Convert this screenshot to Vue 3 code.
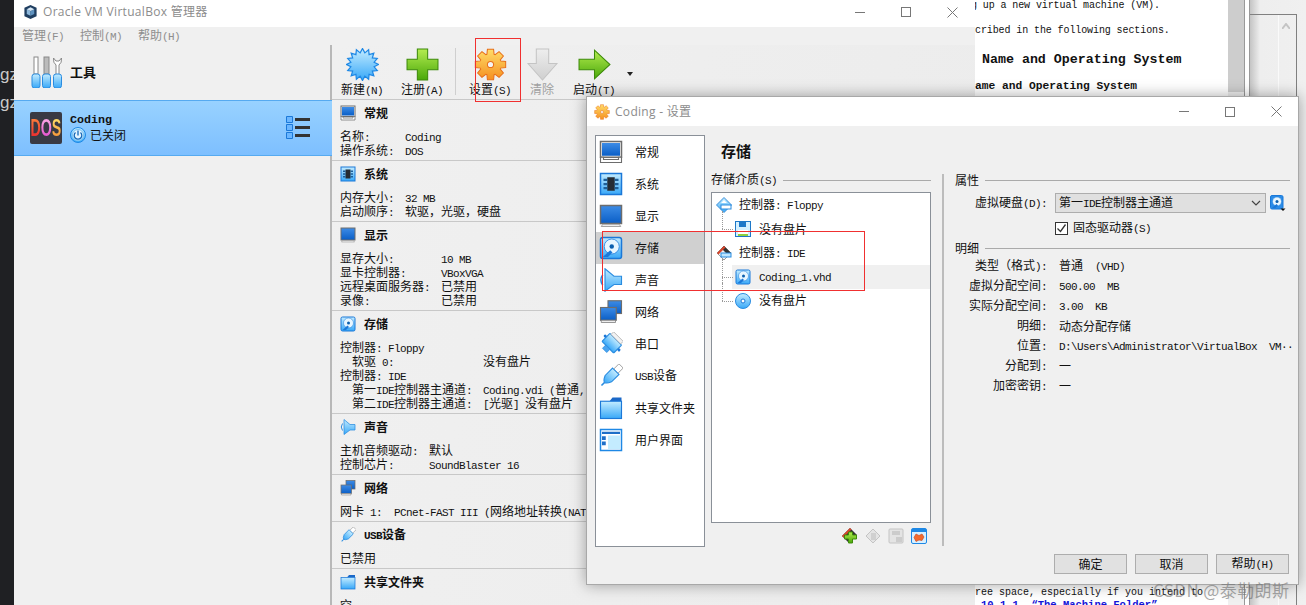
<template>
  <div class="desktop">
    <svg class="defs" width="0" height="0">
      <defs>
        <linearGradient id="gBlue" x1="0" y1="0" x2="0" y2="1"><stop offset="0" stop-color="#3d8ce6" /><stop offset="1" stop-color="#0a5ec6" /></linearGradient>
        <linearGradient id="gSky" x1="0" y1="0" x2="0" y2="1"><stop offset="0" stop-color="#c4ecff" /><stop offset="1" stop-color="#38a8f8" /></linearGradient>
        <linearGradient id="gGreen" x1="0" y1="0" x2="0" y2="1"><stop offset="0" stop-color="#b4ec50" /><stop offset="1" stop-color="#4aa80a" /></linearGradient>
        <linearGradient id="gOrange" x1="0" y1="0" x2="0" y2="1"><stop offset="0" stop-color="#ffdc68" /><stop offset="1" stop-color="#f59020" /></linearGradient>
        <linearGradient id="gGrey" x1="0" y1="0" x2="0" y2="1"><stop offset="0" stop-color="#eeeeee" /><stop offset="1" stop-color="#cfcfcf" /></linearGradient>
      </defs>
      <symbol id="monitor" viewBox="0 0 32 32">
        <rect x="2" y="2" width="28" height="21" fill="#f4f4f4" stroke="#6d6d6d" stroke-width="2" />
        <rect x="4" y="4" width="24" height="17" fill="url(#gBlue)" />
        <path d="M2 23v7h28v-7h-4v3H6v-3z" fill="#fff" stroke="#6d6d6d" stroke-width="1.5" />
      </symbol>
      <symbol id="display" viewBox="0 0 32 32">
        <rect x="2" y="2" width="28" height="24" fill="url(#gBlue)" stroke="#6d6d6d" stroke-width="2" />
        <path d="M5 27l-2 3h26l-2-3z" fill="#eee" stroke="#888" />
      </symbol>
      <symbol id="chip" viewBox="0 0 32 32">
        <rect x="2" y="2" width="28" height="28" fill="url(#gSky)" stroke="#1b78d8" stroke-width="2" />
        <rect x="11" y="7" width="10" height="18" fill="#262c33" />
        <path d="M6 9h5v3H6zM6 14.5h5v3H6zM6 20h5v3H6zM21 9h5v3h-5zM21 14.5h5v3h-5zM21 20h5v3h-5z" fill="#1f5f98" />
      </symbol>
      <symbol id="disk" viewBox="0 0 32 32">
        <rect x="2" y="2" width="28" height="28" rx="3" fill="url(#gSky)" stroke="#1b78d8" stroke-width="2" />
        <circle cx="17" cy="14" r="10" fill="#e8f6ff" stroke="#1b78d8" />
        <circle cx="17" cy="14" r="3" fill="#0c5fae" />
        <path d="M5 28l10-9 3 3-6 6z" fill="#1b78d8" />
      </symbol>
      <symbol id="diskDrop" viewBox="0 0 32 32">
        <rect x="1" y="1" width="25" height="27" rx="3" fill="#2a8ce8" stroke="#1b78d8" stroke-width="2" />
        <circle cx="14" cy="13" r="9" fill="#e8f6ff" stroke="#1b78d8" />
        <circle cx="14" cy="13" r="3" fill="#0c5fae" />
        <path d="M4 26l9-8 3 3-5 5z" fill="#1b78d8" />
        <path d="M21 27h10l-5 5z" fill="#111" />
      </symbol>
      <symbol id="speaker" viewBox="0 0 32 32">
        <path d="M5 9Q0 16 5 23" fill="none" stroke="#2a8ce0" stroke-width="2" />
        <path d="M8 1l12 10h10v11H20L8 31z" fill="url(#gSky)" stroke="#2a8ce0" stroke-width="1.5" />
      </symbol>
      <symbol id="network" viewBox="0 0 32 32">
        <rect x="12" y="1" width="18" height="17" fill="url(#gBlue)" stroke="#6d6d6d" stroke-width="1.5" />
        <rect x="2" y="10" width="21" height="17" fill="url(#gBlue)" stroke="#6d6d6d" stroke-width="1.5" />
        <path d="M3 27h19v3H3z" fill="#eee" stroke="#777" />
      </symbol>
      <symbol id="serial" viewBox="0 0 32 32">
        <g transform="rotate(45 16 16)">
          <rect x="5" y="7" width="22" height="15" rx="1" fill="url(#gSky)" stroke="#2a8ce0" stroke-width="1.5" />
          <path d="M7 2h18v5H7z" fill="#f2f2f2" stroke="#aaa" />
          <path d="M12 22h8v6h-8z" fill="#4aa4f0" stroke="#2a8ce0" />
          <circle cx="3" cy="14" r="2" fill="#1b78d8" /><circle cx="29" cy="14" r="2" fill="#1b78d8" />
        </g>
      </symbol>
      <symbol id="usb" viewBox="0 0 32 32">
        <g transform="rotate(45 16 16)">
          <rect x="12" y="-3" width="8" height="10" fill="#fff" stroke="#888" />
          <path d="M10 7h12v14q-3 7-6 7t-6-7z" fill="url(#gSky)" stroke="#2a8ce0" stroke-width="1.5" />
          <path d="M16 28v6" stroke="#2a8ce0" stroke-width="2" />
        </g>
      </symbol>
      <symbol id="folder" viewBox="0 0 32 32">
        <path d="M14 7l4-5h12v5z" fill="#1b68c8" />
        <rect x="2" y="7" width="28" height="23" fill="url(#gSky)" stroke="#1b78d8" stroke-width="1.5" />
      </symbol>
      <symbol id="uiwin" viewBox="0 0 32 32">
        <rect x="2" y="2" width="28" height="28" fill="#fff" stroke="#1e88e5" stroke-width="2" />
        <rect x="4" y="5" width="24" height="3" fill="#1f6fc8" />
        <path d="M4 11h5v5H4zM4 18h5v5H4z" fill="#1f6fc8" />
        <rect x="12" y="10" width="16" height="18" fill="#c4ecff" />
      </symbol>
      <symbol id="star" viewBox="0 0 32 32"><polygon :points="burst" fill="url(#gSky)" stroke="#1e88e5" stroke-width="1.2" /></symbol>
      <symbol id="gear" viewBox="0 0 32 32">
        <polygon :points="gear" fill="url(#gOrange)" stroke="#e8701a" stroke-width="1" />
        <circle cx="16" cy="16" r="3" fill="#f4f4f4" stroke="#e8701a" />
      </symbol>
      <symbol id="plus" viewBox="0 0 32 32"><path d="M11 1h10v10h10v10H21v10H11V21H1V11h10z" fill="url(#gGreen)" stroke="#3d8a0a" /></symbol>
      <symbol id="down" viewBox="0 0 32 32"><path d="M10 1h12v14h8L16 31 2 15h8z" fill="url(#gGrey)" stroke="#c4c4c4" /></symbol>
      <symbol id="right" viewBox="0 0 32 32"><path d="M1 11h15V2l15 14-15 14v-9H1z" fill="url(#gGreen)" stroke="#3d8a0a" /></symbol>
      <symbol id="tools" viewBox="0 0 32 32">
        <rect x="3" y="1" width="4" height="17" fill="#fff" stroke="#888" />
        <rect x="13" y="1" width="5" height="17" fill="#bbb" stroke="#888" />
        <path d="M25 18V9q-3-2-2.5-7l2.5 3h3l2.5-3q.5 5-2.5 7v9" fill="#fff" stroke="#888" />
        <rect x="1" y="18" width="8" height="14" rx="2.5" fill="url(#gSky)" stroke="#2a8ce0" />
        <rect x="11.5" y="18" width="8" height="14" rx="2.5" fill="url(#gSky)" stroke="#2a8ce0" />
        <rect x="22.5" y="18" width="8" height="14" rx="2.5" fill="url(#gSky)" stroke="#2a8ce0" />
      </symbol>
      <symbol id="power" viewBox="0 0 16 16">
        <circle cx="8" cy="8" r="7.5" fill="url(#gSky)" stroke="#1e88e5" />
        <circle cx="8" cy="8" r="5.5" fill="#e4f4ff" stroke="#7cc4f4" />
        <path d="M5.5 5.5a3.8 3.8 0 1 0 5 0M8 3.5v5" fill="none" stroke="#1468b8" stroke-width="1.3" />
      </symbol>
      <symbol id="list" viewBox="0 0 24 24">
        <path d="M.5.5h6v6h-6zM.5 8.5h6v6h-6zM.5 16.5h6v6h-6z" fill="#6bb6ff" stroke="#1b78d8" />
        <path d="M9 2h15v3H9zM9 10h15v3H9zM9 18h15v3H9z" fill="#333" />
      </symbol>
      <symbol id="vbox" viewBox="0 0 16 16">
        <path d="M8 .5l6.500 3v9L8 15.500l-6.500-3v-9z" fill="#1f3e60" />
        <path d="M4 5l4 2v5l-4-2z" fill="#8db8dc" /><path d="M12 5L8 7v5l4-2z" fill="#5f93c0" /><path d="M8 3l4 2-4 2-4-2z" fill="#d5e6f4" />
      </symbol>
      <symbol id="ctlFloppy" viewBox="0 0 16 16">
        <path d="M8 .5L15.500 8 8 15.500.5 8z" fill="url(#gSky)" stroke="#3a8ed8" />
        <path d="M5 6l3-3 3 3z" fill="#fff" /><rect x="5" y="8" width="10" height="4" fill="#fff" stroke="#2a8ce0" />
      </symbol>
      <symbol id="ctlIde" viewBox="0 0 16 16">
        <path d="M1 8l7-7 7 7-7 7z" fill="#f4f4f4" stroke="#999" />
        <path d="M8 1l7 7-2.500 2.500-7-7z" fill="#333" /><path d="M1 8l7-7 1.500 1.500-7 7z" fill="#d9442a" />
        <rect x="5" y="8" width="10" height="4" fill="#bfe6ff" stroke="#2a8ce0" />
      </symbol>
      <symbol id="floppy" viewBox="0 0 16 16">
        <rect x=".5" y=".5" width="15" height="15" fill="#d4f0ff" stroke="#1e78c8" />
        <rect x="4" y="1" width="7" height="5" fill="#1e78c8" /><rect x="3" y="9" width="10" height="6" fill="#fff" />
        <rect x="3" y="13" width="10" height="2" fill="#8ed040" />
      </symbol>
      <symbol id="cd" viewBox="0 0 16 16">
        <circle cx="8" cy="8" r="7.5" fill="url(#gSky)" stroke="#2a8ce0" />
        <circle cx="8" cy="8" r="2" fill="#fff" stroke="#1b78d8" />
      </symbol>
      <symbol id="addCtl" viewBox="0 0 16 16">
        <path d="M0 8l8-8 7 7-8 8z" fill="#333" /><path d="M0 8l8-8 1.500 1.500-8 8z" fill="#d9442a" />
        <path d="M6.500 4h4v3h4v4h-4v4h-4v-4h-4V7h4z" fill="url(#gGreen)" stroke="#3d8a0a" />
      </symbol>
      <symbol id="delCtl" viewBox="0 0 16 16">
        <path d="M1 8l7-7 7 7-7 7z" fill="#e4e4e4" stroke="#c4c4c4" />
        <path d="M6 5h5v7H6z" fill="#d0d0d0" />
      </symbol>
      <symbol id="addAtt" viewBox="0 0 16 16">
        <rect x="1" y="1" width="14" height="14" rx="1" fill="#e4e4e4" stroke="#c4c4c4" />
        <path d="M4 3h8v4H4zM8 9h6v5H8z" fill="#cccccc" />
      </symbol>
      <symbol id="delAtt" viewBox="0 0 16 16">
        <rect x=".5" y=".5" width="15" height="15" rx="1.5" fill="#d8f0ff" stroke="#1e88e5" />
        <rect x="1" y="1" width="14" height="3" fill="#1e88e5" />
        <path d="M5 6l3 1.500L11 6l2 3-2 3.500-3-.5-3 1.500-2-4z" fill="#f26a2e" stroke="#c8421a" stroke-width=".6" />
      </symbol>
    </svg>

    <div class="under-left">
      <div>gz</div>
      <div>gz</div>
    </div>

    <div class="back">
      <div class="doc">
        <div class="doc-line first">g up a new virtual machine (VM).</div>
        <div class="doc-line second">cribed in the following sections.</div>
        <div class="doc-h1">Name and Operating System</div>
        <div class="doc-h2">ame and Operating System</div>
        <div class="doc-line last">ree space, especially if you intend to</div>
        <div class="doc-link">10.1.1. “The Machine Folder”</div>
      </div>
      <div class="doc-scroll"><div class="thumb"></div></div>
      <div class="doc-edge"></div>
      <div class="back-right">
        <div class="back-box">
          <div class="back-track"></div>
          <svg class="caret" viewBox="0 0 8 6" width="8" height="6"><path d="M0 6l4-5 4 5" fill="none" stroke="#c4c4c4" stroke-width="2" /></svg>
        </div>
      </div>
    </div>

    <!-- manager window -->
    <div class="manager">
      <div class="titlebar">
        <svg class="tb-icon"><use href="#vbox" /></svg>
        <span class="tb-text">Oracle VM VirtualBox 管理器</span>
        <div class="ctrls">
          <span class="ctrl"><i class="c-min"></i></span>
          <span class="ctrl"><i class="c-max"></i></span>
          <span class="ctrl"><svg width="11" height="11" viewBox="0 0 11 11"><path d="M.5.5l10 10M10.500.5l-10 10" stroke="#777" fill="none" /></svg></span>
        </div>
      </div>
      <div class="menubar">
        <span v-for="m in menus" :key="m" class="menu-item"><span v-for="p in seg(m)" :class="{ m: p.m }">{{ p.t }}</span></span>
      </div>
      <div class="mgr-body">
        <div class="vm-list">
          <div class="tools-row">
            <svg class="ic32"><use href="#tools" /></svg>
            <b>工具</b>
          </div>
          <div class="vm-row">
            <div class="dos"><div class="dos-text"><span class="d1">D</span><span class="d2">O</span><span class="d3">S</span></div></div>
            <div class="vm-meta">
              <b class="m vm-name">Coding</b>
              <div class="vm-state"><svg class="ic16"><use href="#power" /></svg>已关闭</div>
            </div>
            <svg class="vm-menu"><use href="#list" /></svg>
          </div>
        </div>
        <div class="mgr-right">
          <div class="toolbar">
            <div v-for="b in toolButtons" :key="b.label" class="tbtn" :class="[b.cls, { off: b.off }]">
              <svg class="ic33"><use :href="'#' + b.icon" /></svg>
              <span class="tbtn-label"><span v-for="p in seg(b.label)" :class="{ m: p.m }">{{ p.t }}</span></span>
            </div>
            <i class="tdrop"></i>
          </div>
          <section v-for="s in sections" :key="s.title" class="sec">
            <div class="sec-head">
              <svg class="ic16"><use :href="'#' + s.icon" /></svg>
              <b><span v-for="p in seg(s.title)" :class="{ m: p.m }">{{ p.t }}</span></b>
            </div>
            <div v-for="r in s.rows" class="sec-row">
              <span class="sec-label" :style="{ width: s.col + 'px' }"><span v-for="p in seg(r[0])" :class="{ m: p.m }">{{ p.t }}</span></span>
              <span><span v-for="p in seg(r[1])" :class="{ m: p.m }">{{ p.t }}</span></span>
            </div>
          </section>
        </div>
      </div>
    </div>

    <!-- settings dialog -->
    <div class="dialog">
      <div class="d-title">
        <svg class="ic16"><use href="#gear" /></svg>
        <span class="tb-text">Coding - 设置</span>
        <div class="ctrls">
          <span class="ctrl"><i class="c-min"></i></span>
          <span class="ctrl"><i class="c-max"></i></span>
          <span class="ctrl"><svg width="11" height="11" viewBox="0 0 11 11"><path d="M.5.5l10 10M10.500.5l-10 10" stroke="#777" fill="none" /></svg></span>
        </div>
      </div>
      <div class="d-body">
        <div class="d-main">
          <div class="side">
            <div v-for="it in sideItems" :key="it.label" class="side-item" :class="{ sel: it.sel }">
              <svg class="ic24"><use :href="'#' + it.icon" /></svg>
              <span><span v-for="p in seg(it.label)" :class="{ m: p.m }">{{ p.t }}</span></span>
            </div>
          </div>
          <div class="center">
            <div class="heading">存储</div>
            <div class="group"><span>存储介质<span class="m">(S)</span></span></div>
            <div class="tree">
              <div v-for="t in treeRows" :key="t.text" class="tree-row" :class="{ child: t.child, mid: t.mid, chosen: t.sel }">
                <div class="tree-cell">
                  <svg class="ic16"><use :href="'#' + t.icon" /></svg>
                  <span><span v-for="p in seg(t.text)" :class="{ m: p.m }">{{ p.t }}</span></span>
                </div>
              </div>
            </div>
            <div class="tree-tools">
              <svg class="ic16"><use href="#addCtl" /></svg>
              <svg class="ic16"><use href="#delCtl" /></svg>
              <svg class="ic16"><use href="#addAtt" /></svg>
              <svg class="ic16"><use href="#delAtt" /></svg>
            </div>
          </div>
          <div class="splitter"></div>
          <div class="props">
            <div class="group"><span>属性</span></div>
            <div class="form-row">
              <span class="p-label">虚拟硬盘<span class="m">(D):</span></span>
              <div class="combo">
                <span>第一<span class="m">IDE</span>控制器主通道</span>
                <svg width="10" height="6" viewBox="0 0 10 6"><path d="M1 1l4 4 4-4" fill="none" stroke="#444" stroke-width="1.2" /></svg>
              </div>
              <svg class="ic16 combo-ic"><use href="#diskDrop" /></svg>
            </div>
            <div class="check-row">
              <span class="check"><svg width="11" height="11" viewBox="0 0 11 11"><path d="M1.5 5.5l3 3 5-7" fill="none" stroke="#333" stroke-width="1.3" /></svg></span>
              <span>固态驱动器<span class="m">(S)</span></span>
            </div>
            <div class="group detail-head"><span>明细</span></div>
            <div v-for="d in details" :key="d[0]" class="p-row">
              <span class="p-label"><span v-for="p in seg(d[0])" :class="{ m: p.m }">{{ p.t }}</span></span>
              <span class="p-value"><span v-for="p in seg(d[1])" :class="{ m: p.m }">{{ p.t }}</span></span>
            </div>
          </div>
        </div>
        <div class="d-foot">
          <button class="btn">确定</button>
          <button class="btn">取消</button>
          <button class="btn">帮助<span class="m">(H)</span></button>
        </div>
      </div>
    </div>

    <!-- annotations over the screenshot -->
    <div class="mark mark-settings"></div>
    <div class="mark mark-ide"></div>
    <div class="watermark">CSDN @泰勒朗斯</div>
  </div>
</template>

<script setup>
const seg = (text) =>
  (text.match(/[\x00-\x7f\xb7]+|[^\x00-\x7f\xb7]+/g) || []).map((t) => ({ t, m: /^[\x00-\x7f\xb7]/.test(t) }));

const ring = (n, fn) => {
  const pts = [];
  for (let i = 0; i < n; i++) fn((i / n) * Math.PI * 2, pts);
  return pts.map((p) => p.map((v) => v.toFixed(2)).join(',')).join(' ');
};
const at = (a, r) => [16 + Math.cos(a) * r, 16 + Math.sin(a) * r];

const burst = ring(16, (a, pts) => {
  pts.push(at(a, 15.5), at(a + Math.PI / 16, 11.5));
});
const gear = ring(8, (a, pts) => {
  pts.push(at(a - 0.34, 10.5), at(a - 0.2, 15), at(a + 0.2, 15), at(a + 0.34, 10.5));
});

const menus = ['管理(F)', '控制(M)', '帮助(H)'];

const toolButtons = [
  { label: '新建(N)', icon: 'star', cls: 'b-new' },
  { label: '注册(A)', icon: 'plus', cls: 'b-reg' },
  { label: '设置(S)', icon: 'gear', cls: 'b-set' },
  { label: '清除', icon: 'down', cls: 'b-clr', off: true },
  { label: '启动(T)', icon: 'right', cls: 'b-run' },
];

const sections = [
  { title: '常规', icon: 'monitor', col: 65, rows: [['名称:', 'Coding'], ['操作系统:', 'DOS']] },
  { title: '系统', icon: 'chip', col: 65, rows: [['内存大小:', '32 MB'], ['启动顺序:', '软驱，光驱，硬盘']] },
  { title: '显示', icon: 'display', col: 101, rows: [['显存大小:', '10 MB'], ['显卡控制器:', 'VBoxVGA'], ['远程桌面服务器:', '已禁用'], ['录像:', '已禁用']] },
  {
    title: '存储', icon: 'disk', col: 143,
    rows: [['控制器: Floppy', ''], ['  软驱 0:', '没有盘片'], ['控制器: IDE', ''], ['  第一IDE控制器主通道:', 'Coding.vdi (普通,'], ['  第二IDE控制器主通道:', '[光驱] 没有盘片']],
  },
  { title: '声音', icon: 'speaker', col: 89, rows: [['主机音频驱动:', '默认'], ['控制芯片:', 'SoundBlaster 16']] },
  { title: '网络', icon: 'network', col: 0, rows: [['网卡 1:  PCnet-FAST III (网络地址转换(NAT)', '']] },
  { title: 'USB设备', icon: 'usb', col: 0, rows: [['已禁用', '']] },
  { title: '共享文件夹', icon: 'folder', col: 0, rows: [['空', '']] },
];

const sideItems = [
  { label: '常规', icon: 'monitor' },
  { label: '系统', icon: 'chip' },
  { label: '显示', icon: 'display' },
  { label: '存储', icon: 'disk', sel: true },
  { label: '声音', icon: 'speaker' },
  { label: '网络', icon: 'network' },
  { label: '串口', icon: 'serial' },
  { label: 'USB设备', icon: 'usb' },
  { label: '共享文件夹', icon: 'folder' },
  { label: '用户界面', icon: 'uiwin' },
];

const treeRows = [
  { text: '控制器: Floppy', icon: 'ctlFloppy' },
  { text: '没有盘片', icon: 'floppy', child: true },
  { text: '控制器: IDE', icon: 'ctlIde' },
  { text: 'Coding_1.vhd', icon: 'disk', child: true, mid: true, sel: true },
  { text: '没有盘片 ', icon: 'cd', child: true },
];

const details = [
  ['类型（格式):', '普通  (VHD)'],
  ['虚拟分配空间:', '500.00  MB'],
  ['实际分配空间:', '3.00  KB'],
  ['明细:', '动态分配存储'],
  ['位置:', 'D:\\Users\\Administrator\\VirtualBox  VM··'],
  ['分配到:', '一'],
  ['加密密钥:', '一'],
];
</script>

<style>
body {
  margin: 0;
}
</style>

<style scoped>
.desktop {
  position: relative;
  width: 1306px;
  height: 605px;
  overflow: hidden;
  background: #1f2023;
  font: 12px/14px "Noto Sans CJK SC", "Liberation Sans", sans-serif;
  color: #111;
}
.defs {
  position: absolute;
}
.m {
  font-family: "Liberation Mono", monospace;
  font-size: 11px;
  letter-spacing: -.6px;
  white-space: pre;
}
.ic16 { width: 16px; height: 16px; flex: none; }
.ic24 { width: 24px; height: 24px; flex: none; }
.ic32 { width: 32px; height: 32px; flex: none; }
.ic33 { width: 33px; height: 33px; flex: none; }

.under-left {
  position: absolute;
  left: 0;
  top: 61px;
  width: 14px;
  overflow: hidden;
  color: #c8c8c8;
  font: 17px/28px "Liberation Sans", sans-serif;
}

.back {
  position: absolute;
  left: 975px;
  top: 0;
  right: 0;
  height: 605px;
  display: flex;
}
.doc {
  width: 253px;
  height: 605px;
  background: #fff;
  display: flex;
  flex-direction: column;
  overflow: hidden;
  white-space: pre;
  font-family: "Liberation Mono", monospace;
  font-size: 10px;
  line-height: 12px;
}
.first {
  margin: 0 0 0 -4px;
  letter-spacing: -.1px;
}
.second {
  margin-top: 13px;
  letter-spacing: -.1px;
}
.doc-h1 {
  margin-top: 15px;
  padding-left: 7px;
  font-size: 13.3px;
  line-height: 16px;
  font-weight: 700;
}
.doc-h2 {
  margin-top: 11px;
  font-size: 11.25px;
  line-height: 14px;
  font-weight: 700;
}
.last { margin-top: auto; }
.doc-link {
  margin-bottom: -6px;
  padding-left: 6px;
  color: #1414d8;
  font-size: 10.5px;
  font-weight: 700;
}
.doc-scroll {
  width: 16px;
  background: #f0f0f0;
}
.thumb {
  height: 92px;
  background: #cdcdcd;
}
.doc-edge {
  width: 6px;
  background: #fff;
  border-left: 1px solid #999;
  border-right: 1px solid #999;
  box-sizing: border-box;
}
.back-right {
  flex: 1;
  background: linear-gradient(90deg, #c4c4c4, #eeeeee 10px, #f0f0f0);
  padding-top: 14px;
}
.back-box {
  position: relative;
  width: 46px;
  height: 600px;
  border-top: 1px solid #808080;
  border-right: 1px solid #808080;
}
.back-track {
  position: absolute;
  left: 28px;
  top: 0;
  bottom: 0;
  width: 1px;
  background: #fafafa;
}
.caret {
  position: absolute;
  left: 32px;
  top: 8px;
}

.manager {
  position: absolute;
  left: 14px;
  top: 0;
  width: 961px;
  height: 605px;
  display: flex;
  flex-direction: column;
  background: #f0f0f0;
}
.titlebar {
  height: 27px;
  flex: none;
  box-sizing: border-box;
  display: flex;
  align-items: center;
  padding: 0 0 3px 9px;
  background: #fff;
}
.tb-icon {
  width: 15px;
  height: 16px;
  margin-right: 5px;
}
.tb-text {
  color: #8c8c8c;
  font-family: "Open Sans", "Noto Sans CJK SC", sans-serif;
  font-size: 12px;
  letter-spacing: .3px;
}
.ctrls {
  margin-left: auto;
  display: flex;
}
.d-title .ctrls {
  margin-right: -1px;
}
.ctrl {
  width: 46px;
  display: flex;
  align-items: center;
  justify-content: center;
  height: 16px;
}
.c-min {
  width: 10px;
  height: 1px;
  background: #777;
}
.c-max {
  width: 10px;
  height: 10px;
  box-sizing: border-box;
  border: 1px solid #777;
}
.menubar {
  height: 18px;
  flex: none;
  display: flex;
  align-items: center;
  gap: 16px;
  padding-left: 8px;
  color: #8e8e8e;
}
.mgr-body {
  flex: 1;
  display: flex;
  min-height: 0;
}
.vm-list {
  width: 318px;
  flex: none;
  box-sizing: border-box;
  border-right: 2px solid #b8b8b8;
}
.tools-row {
  height: 54px;
  display: flex;
  align-items: center;
  gap: 7px;
  padding-left: 17px;
  font-size: 13px;
}
.vm-row {
  height: 56px;
  box-sizing: border-box;
  display: flex;
  align-items: center;
  padding-left: 16px;
  margin-top: 1px;
  margin-right: -2px;
  position: relative;
  background: linear-gradient(#98d2ff, #7dbfff);
  border-top: 1px solid #56aaf0;
  border-bottom: 1px solid #56aaf0;
}
.dos {
  width: 32px;
  height: 32px;
  flex: none;
  border-radius: 2px;
  background: #393a44;
  display: flex;
  justify-content: center;
  align-items: center;
  overflow: hidden;
  font: 700 23px/24px "Liberation Sans", sans-serif;
}
.dos-text {
  display: flex;
  flex: none;
  transform: scaleX(.62);
}
.dos-text span {
  display: block;
  color: transparent;
  -webkit-background-clip: text;
  background-clip: text;
}
.d1 { background-image: linear-gradient(#ff8a3c, #e81c2c); }
.d2 { background-image: linear-gradient(#ffb8e8, #e040c8); }
.d3 { background-image: linear-gradient(#ffe870, #f58a30); }
.vm-meta {
  margin-left: 8px;
}
.vm-name {
  font-size: 11.7px;
  letter-spacing: 0;
  display: block;
  line-height: 13px;
}
.vm-state {
  display: flex;
  align-items: center;
  gap: 4px;
  font-size: 12px;
}
.vm-menu {
  width: 24px;
  height: 24px;
  position: absolute;
  left: 272px;
  top: 15px;
}

.mgr-right {
  flex: 1;
  min-width: 0;
  overflow: hidden;
  background: linear-gradient(100deg, #f0f0f0, #ececec);
}
.toolbar {
  height: 54px;
  display: flex;
  box-sizing: border-box;
  padding: 3px 0 0;
}
.tbtn {
  display: flex;
  flex-direction: column;
  align-items: center;
  width: 60px;
}
.tbtn-label {
  margin-top: 1px;
  white-space: nowrap;
}
.b-reg {
  margin-right: 4px;
  position: relative;
}
.b-reg::after {
  content: "";
  position: absolute;
  right: -4px;
  top: 0;
  bottom: 4px;
  width: 1px;
  background: #cfcfcf;
}
.b-set { margin-left: 4px; }
.b-clr { width: 44px; }
.off { color: #a0a0a0; }
.tdrop {
  width: 0;
  height: 0;
  margin: 24px 0 0 3px;
  border-left: 3.5px solid transparent;
  border-right: 3.5px solid transparent;
  border-top: 4px solid #222;
}
.sec {
  border-top: 1px solid #c8c8c8;
  padding-bottom: 3px;
  white-space: pre;
}
.sec-head {
  height: 25px;
  display: flex;
  align-items: center;
  gap: 8px;
  padding-left: 8px;
  margin-bottom: 4px;
}
.sec-row {
  display: flex;
  padding-left: 8px;
  height: 14px;
}
.sec-label {
  flex: none;
}

.dialog {
  position: absolute;
  left: 586px;
  top: 96px;
  width: 713px;
  height: 489px;
  box-sizing: border-box;
  border: 1px solid #a8a8a8;
  background: #f0f0f0;
  box-shadow: 0 0 14px rgba(0, 0, 0, .35);
  display: flex;
  flex-direction: column;
}
.d-title {
  height: 29px;
  flex: none;
  display: flex;
  align-items: center;
  gap: 5px;
  padding-left: 7px;
  background: #fff;
}
.d-body {
  padding: 9px 9px 0 8px;
}
.d-main {
  display: flex;
  height: 412px;
}
.side {
  width: 110px;
  flex: none;
  box-sizing: border-box;
  border: 1px solid #8a9098;
  background: #fff;
}
.side-item {
  height: 32px;
  display: flex;
  align-items: center;
  gap: 12px;
  padding-left: 3px;
}
.side-item.sel {
  background: #d0d0d0;
}
.center {
  width: 220px;
  flex: none;
  margin-left: 6px;
}
.heading {
  padding: 6px 0 0 10px;
  font-size: 15px;
  font-weight: 700;
  line-height: 20px;
}
.group {
  display: flex;
  align-items: center;
  gap: 6px;
  height: 14px;
}
.group::after {
  content: "";
  flex: 1;
  height: 1px;
  background: #aaa;
}
.center .group {
  margin-top: 12px;
}
.tree {
  margin-top: 5px;
  height: 331px;
  box-sizing: border-box;
  border: 1px solid #8a9098;
  background: #fff;
}
.tree-row {
  height: 24px;
  position: relative;
  display: flex;
  padding-left: 4px;
}
.tree-cell {
  flex: 1;
  display: flex;
  align-items: center;
  gap: 7px;
}
.tree-row.child {
  padding-left: 20px;
}
.tree-row.child .tree-cell {
  padding-left: 3px;
  gap: 8px;
}
.tree-row.chosen .tree-cell {
  background: #f0f0f0;
}
.tree-row.child::before {
  content: "";
  position: absolute;
  left: 10px;
  top: -6px;
  height: 18px;
  border-left: 1px dotted #999;
}
.tree-row.mid::before {
  height: 30px;
}
.tree-row.child::after {
  content: "";
  position: absolute;
  left: 10px;
  top: 12px;
  width: 11px;
  border-top: 1px dotted #999;
}
.tree-tools {
  display: flex;
  justify-content: flex-end;
  gap: 7px;
  margin-top: 5px;
  padding-right: 4px;
}
.splitter {
  width: 2px;
  height: 372px;
  flex: none;
  margin: 39px 0 0 11px;
  background: #bcbcbc;
}
.props {
  width: 335px;
  flex: none;
  margin-left: 11px;
  padding-top: 38px;
}
.form-row {
  display: flex;
  align-items: center;
  margin-top: 6px;
}
.p-label {
  width: 92px;
  flex: none;
  text-align: right;
  white-space: pre;
}
.combo {
  width: 211px;
  height: 20px;
  margin-left: 8px;
  box-sizing: border-box;
  border: 1px solid #adadad;
  background: #e0e0e0;
  display: flex;
  align-items: center;
  justify-content: space-between;
  padding: 0 4px 0 3px;
}
.combo-ic {
  margin-left: 4px;
}
.check-row {
  display: flex;
  align-items: center;
  gap: 5px;
  height: 14px;
  margin: 8px 0 0 100px;
}
.check {
  width: 13px;
  height: 13px;
  box-sizing: border-box;
  border: 1px solid #333;
  background: #fff;
  display: flex;
  align-items: center;
  justify-content: center;
}
.detail-head {
  margin-top: 6px;
}
.p-row {
  display: flex;
  align-items: center;
  height: 20px;
}
.detail-head + .p-row {
  margin-top: 1px;
}
.p-value {
  margin-left: 12px;
  white-space: pre;
}
.d-foot {
  display: flex;
  justify-content: flex-end;
  gap: 8px;
  margin-top: 7px;
}
.btn {
  width: 73px;
  height: 20px;
  padding: 0;
  border: 1px solid #adadad;
  background: #e1e1e1;
  color: #111;
  font: inherit;
}

.mark {
  position: absolute;
  box-sizing: border-box;
  border: 1px solid #f03030;
}
.mark-settings {
  left: 475px;
  top: 38px;
  width: 46px;
  height: 64px;
}
.mark-ide {
  left: 602px;
  top: 231px;
  width: 263px;
  height: 60px;
}
.watermark {
  position: absolute;
  left: 1153px;
  top: 578px;
  color: rgba(110, 110, 110, .6);
  font-size: 17px;
  letter-spacing: .4px;
  line-height: 24px;
  white-space: nowrap;
}
</style>
